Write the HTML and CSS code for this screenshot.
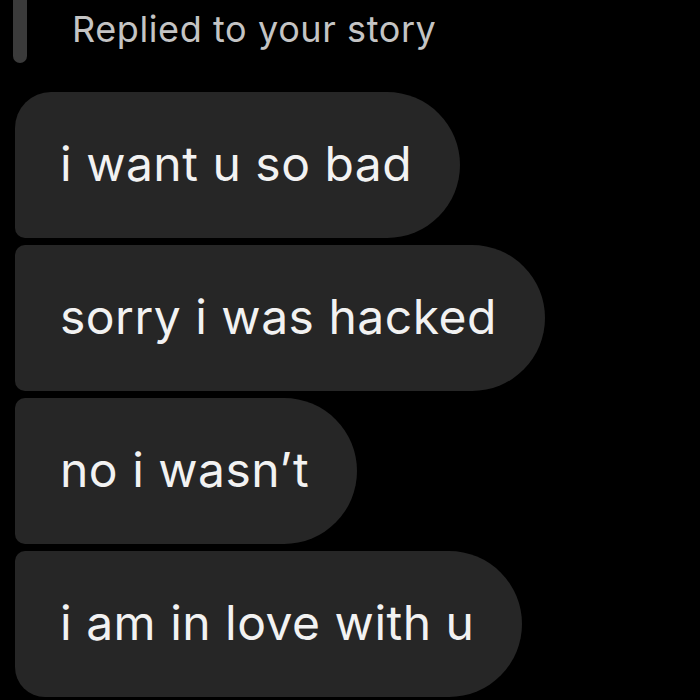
FILE: index.html
```html
<!DOCTYPE html>
<html lang="en">
<head>
<meta charset="utf-8">
<title>Replied to your story</title>
<link rel="stylesheet" href="styles.css">
</head>
<body>
<div class="thread">
  <div class="reply-head">
    <span class="reply-bar"></span>
    <span class="reply-label">Replied to your story</span>
  </div>
  <div class="bubbles">
    <div class="bubble first">i want u so bad</div>
    <div class="bubble">sorry i was hacked</div>
    <div class="bubble">no i wasn’t</div>
    <div class="bubble last">i am in love with u</div>
  </div>
</div>
</body>
</html>
```

FILE: styles.css
```css
html, body {
  margin: 0;
  padding: 0;
  background: #000;
  width: 700px;
  height: 700px;
  overflow: hidden;
}

.thread {
  display: flex;
  flex-direction: column;
  padding-left: 15px;
  font-family: Inter, "Liberation Sans", sans-serif;
}

.reply-head {
  display: flex;
  align-items: flex-start;
  height: 63px;
}

.reply-bar {
  width: 14px;
  height: 63px;
  margin-left: -2px;
  background: #3b3b3b;
  border-radius: 0 0 7px 7px;
}

.reply-label {
  margin-left: 45px;
  margin-top: 9px;
  color: #c4c4c4;
  font-size: 36px;
  line-height: 40px;
  letter-spacing: 0.6px;
}

.bubbles {
  display: flex;
  flex-direction: column;
  align-items: flex-start;
  gap: 7px;
  margin-top: 29px;
}

.bubble {
  display: flex;
  align-items: center;
  height: 146px;
  box-sizing: border-box;
  padding: 0 48px 4px 45px;
  background: #262626;
  color: #f2f2f2;
  font-size: 48px;
  letter-spacing: 0.5px;
  border-radius: 10px 73px 73px 10px;
  white-space: nowrap;
}

.bubble.first {
  border-top-left-radius: 36px;
}

.bubble.last {
  border-bottom-left-radius: 30px;
}
```
